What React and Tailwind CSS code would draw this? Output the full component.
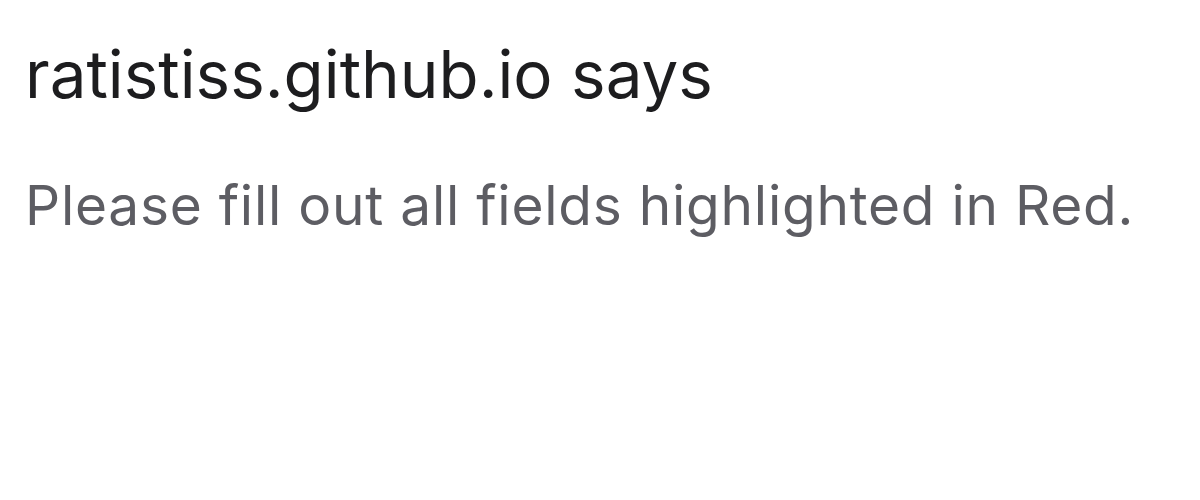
export default function App() {
  return (
    <div className="w-[1200px] h-[500px] bg-white pl-[25px] pt-[36px]" style={{ fontFamily: "Inter, 'Noto Sans', sans-serif" }}>
      <div className="text-[65.5px] leading-[78px] text-[#1d1d1f] whitespace-nowrap">ratistiss.github.io says</div>
      <div className="mt-[57px] text-[55px] leading-[68px] tracking-[0.75px] text-[#5d5d63] whitespace-nowrap">Please fill out all fields highlighted in Red.</div>
    </div>
  );
}
